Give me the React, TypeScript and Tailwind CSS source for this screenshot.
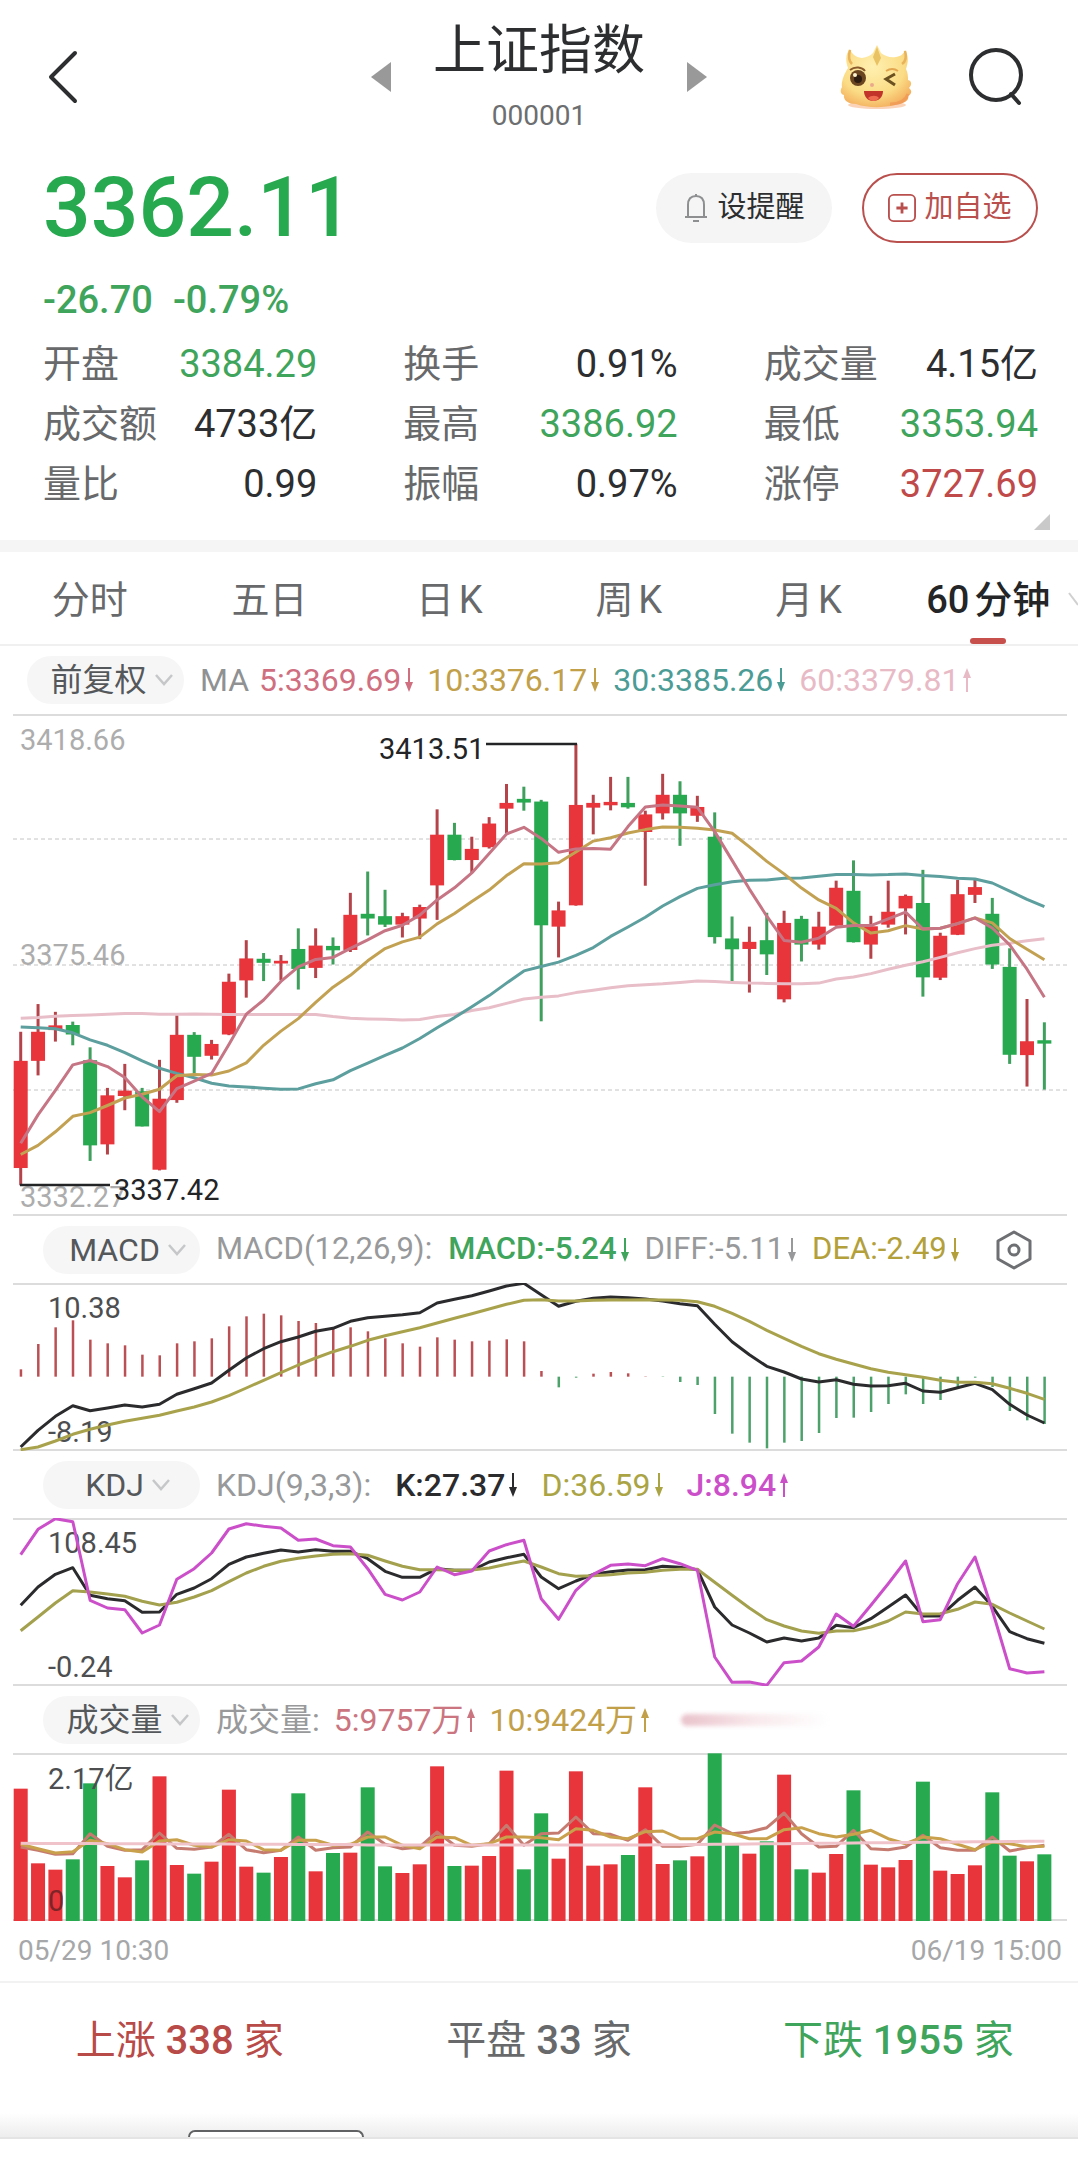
import { useState, type ReactNode } from "react"
import { clsx } from "clsx"

// ─── Quote data ────────────────────────────────────────────────────────────────

type Tone = "up" | "down" | "flat"

const TONE_TEXT: Record<Tone, string> = {
  up: "text-[#c04a4a]",
  down: "text-[#3fa45c]",
  flat: "text-[#2c2e30]",
}

const STATS: { label: string; value: string; tone: Tone }[] = [
  { label: "开盘", value: "3384.29", tone: "down" },
  { label: "换手", value: "0.91%", tone: "flat" },
  { label: "成交量", value: "4.15亿", tone: "flat" },
  { label: "成交额", value: "4733亿", tone: "flat" },
  { label: "最高", value: "3386.92", tone: "down" },
  { label: "最低", value: "3353.94", tone: "down" },
  { label: "量比", value: "0.99", tone: "flat" },
  { label: "振幅", value: "0.97%", tone: "flat" },
  { label: "涨停", value: "3727.69", tone: "up" },
]

const TABS = ["分时", "五日", "日K", "周K", "月K", "60分钟"]

// ─── Chart data ────────────────────────────────────────────────────────────────

const CHART_W = 1078
const STEP = 17.35
const FIRST_X = 20.7

const RED = "#e8343b"
const GREEN = "#27a950"

// [direction, high, body top, body bottom, low]
const CANDLES: [string, number, number, number, number][] = [
  ["r", 982, 1068, 1385, 1436], ["r", 900, 982, 1068, 1111], ["r", 923, 963, 977, 1011],
  ["g", 952, 962, 990, 1022], ["g", 1028, 1066, 1318, 1364], ["r", 1148, 1170, 1315, 1345],
  ["r", 1077, 1156, 1172, 1214], ["g", 1148, 1158, 1262, 1262], ["r", 1065, 1180, 1390, 1392],
  ["r", 933, 991, 1184, 1192], ["g", 983, 991, 1056, 1106], ["r", 1006, 1018, 1053, 1064],
  ["r", 810, 834, 990, 992], ["r", 711, 765, 830, 881], ["g", 749, 766, 778, 832],
  ["r", 755, 772, 780, 830], ["g", 676, 737, 796, 857], ["r", 676, 727, 793, 823],
  ["g", 703, 728, 741, 783], ["r", 571, 636, 740, 746], ["g", 508, 633, 647, 697],
  ["g", 562, 640, 665, 672], ["r", 630, 640, 665, 703], ["r", 606, 613, 647, 708],
  ["r", 324, 399, 549, 651], ["g", 364, 399, 474, 475], ["r", 405, 441, 474, 512],
  ["r", 347, 366, 436, 440], ["r", 249, 305, 322, 395], ["g", 257, 293, 304, 328],
  ["g", 296, 301, 667, 951], ["r", 597, 623, 671, 762], ["r", 130, 311, 608, 609],
  ["r", 281, 305, 319, 398], ["r", 228, 302, 312, 327], ["g", 228, 305, 318, 322],
  ["r", 328, 339, 391, 550], ["r", 219, 281, 336, 354], ["g", 241, 281, 336, 432],
  ["r", 284, 317, 343, 361], ["g", 333, 405, 702, 721], ["g", 641, 706, 738, 832],
  ["r", 671, 716, 737, 866], ["g", 630, 711, 753, 814], ["r", 624, 660, 886, 895],
  ["g", 639, 648, 724, 774], ["r", 627, 671, 724, 739], ["r", 535, 556, 668, 668],
  ["g", 475, 565, 717, 718], ["r", 639, 670, 724, 766], ["r", 535, 627, 665, 674],
  ["r", 576, 580, 617, 694], ["g", 503, 601, 821, 878], ["r", 689, 698, 822, 829],
  ["r", 533, 575, 695, 696], ["r", 528, 554, 577, 601], ["g", 586, 633, 783, 796],
  ["g", 735, 790, 1050, 1077], ["r", 885, 1010, 1051, 1144], ["g", 954, 1007, 1017, 1153],
]

const MA5 = [1312, 1228, 1155, 1080, 1067, 1085, 1117, 1175, 1218, 1150, 1128, 1105, 1020, 930, 888, 833, 790, 768, 762, 735, 710, 683, 667, 637, 592, 556, 512, 455, 397, 377, 410, 451, 441, 440, 442, 375, 317, 311, 314, 318, 390, 475, 560, 640, 712, 717, 705, 673, 668, 668, 648, 628, 678, 676, 662, 645, 675, 725, 797, 880]
const MA10 = [1345, 1318, 1278, 1232, 1221, 1200, 1178, 1167, 1152, 1112, 1108, 1110, 1098, 1074, 1022, 980, 943, 895, 850, 815, 772, 736, 716, 702, 663, 632, 597, 563, 520, 485, 486, 482, 450, 418, 408, 394, 384, 376, 377, 380, 385, 395, 435, 478, 515, 557, 592, 617, 660, 690, 683, 668, 678, 676, 662, 645, 660, 706, 738, 769]
const MA30 = [968, 970, 973, 985, 1006, 1022, 1044, 1068, 1090, 1105, 1118, 1134, 1142, 1145, 1149, 1152, 1151, 1136, 1124, 1097, 1075, 1052, 1030, 1002, 970, 940, 908, 875, 838, 802, 789, 776, 756, 733, 700, 672, 643, 610, 582, 558, 547, 538, 534, 533, 528, 527, 522, 517, 517, 518, 517, 515, 520, 523, 528, 530, 542, 566, 590, 612]
const MA60 = [942, 940, 936, 934, 932, 930, 928, 928, 930, 930, 929, 930, 931, 931, 931, 931, 931, 931, 937, 942, 944, 945, 947, 946, 937, 931, 919, 911, 898, 885, 880, 876, 866, 859, 852, 846, 843, 840, 836, 832, 833, 836, 838, 839, 840, 840, 838, 826, 820, 810, 797, 785, 775, 762, 748, 736, 726, 720, 713, 707]

const MACD_ZERO = 499
const MACD_BARS = [477, 401, 351, 330, 388, 399, 405, 433, 435, 399, 393, 384, 348, 318, 310, 315, 332, 338, 355, 351, 363, 384, 399, 409, 381, 388, 393, 391, 387, 393, 482, 531, 502, 490, 485, 489, 498, 500, 515, 524, 611, 670, 697, 714, 697, 692, 668, 623, 622, 605, 581, 552, 581, 569, 532, 502, 530, 602, 630, 641]
const DIFF = [710, 660, 618, 586, 601, 593, 584, 590, 582, 552, 535, 518, 480, 443, 415, 394, 380, 363, 354, 333, 322, 318, 313, 307, 278, 267, 256, 242, 227, 219, 253, 288, 273, 264, 260, 262, 266, 272, 280, 286, 342, 394, 433, 468, 485, 506, 515, 508, 522, 527, 526, 519, 542, 546, 532, 519, 538, 582, 614, 638]
const DEA = [718, 710, 692, 672, 657, 644, 633, 624, 615, 602, 590, 575, 556, 533, 510, 487, 464, 443, 424, 408, 390, 376, 364, 352, 338, 324, 310, 296, 282, 270, 268, 272, 272, 270, 269, 269, 268, 269, 270, 274, 288, 309, 333, 360, 384, 408, 430, 447, 461, 475, 486, 493, 501, 510, 516, 516, 520, 534, 549, 567]

const KDJ_K = [435, 380, 342, 322, 405, 415, 421, 456, 455, 402, 383, 355, 312, 290, 279, 269, 275, 268, 273, 273, 295, 333, 351, 351, 325, 330, 330, 305, 292, 282, 350, 385, 362, 342, 334, 329, 328, 318, 321, 328, 440, 494, 518, 545, 533, 542, 533, 495, 502, 475, 440, 404, 467, 467, 420, 380, 438, 514, 535, 549]
const KDJ_D = [511, 470, 428, 391, 395, 401, 408, 423, 434, 426, 410, 391, 364, 338, 318, 303, 294, 287, 282, 280, 285, 302, 318, 328, 328, 330, 329, 323, 312, 302, 320, 340, 348, 346, 343, 338, 336, 330, 327, 327, 366, 405, 443, 478, 497, 512, 519, 512, 511, 500, 482, 455, 461, 460, 447, 425, 432, 458, 482, 506]
const KDJ_J = [283, 207, 175, 184, 420, 443, 448, 518, 494, 357, 325, 278, 206, 190, 198, 203, 240, 236, 256, 260, 325, 402, 419, 395, 320, 343, 332, 272, 253, 240, 415, 477, 390, 342, 315, 311, 316, 295, 310, 330, 590, 666, 665, 675, 607, 602, 560, 461, 498, 435, 370, 302, 484, 478, 370, 290, 450, 625, 638, 634]

const VOLUME = [295, 519, 538, 507, 279, 527, 561, 510, 258, 524, 550, 514, 298, 529, 547, 500, 309, 543, 488, 487, 291, 528, 548, 522, 228, 527, 526, 497, 241, 537, 369, 505, 243, 526, 522, 494, 291, 521, 510, 498, 189, 461, 490, 453, 253, 537, 547, 491, 300, 523, 531, 509, 274, 541, 551, 525, 306, 496, 513, 492]
const VOLUME_SIDE = "rrrggrrgrrgrrrgrgrgrggrrrgrrrggrrrrgrrgrggrgrgrrgrrrgrrrggrg"
const VOL_MA5 = [470, 480, 492, 490, 430, 468, 480, 478, 428, 474, 477, 470, 432, 478, 487, 480, 440, 480, 472, 470, 425, 462, 475, 470, 425, 465, 468, 460, 405, 465, 430, 428, 380, 430, 432, 450, 418, 468, 468, 462, 404, 430, 425, 412, 368, 430, 470, 468, 420, 475, 478, 470, 435, 472, 480, 480, 440, 482, 472, 465]
const VOL_MA10 = [462, 475, 488, 484, 450, 460, 478, 485, 452, 448, 465, 470, 448, 452, 478, 480, 450, 450, 465, 462, 440, 440, 465, 475, 440, 442, 465, 460, 440, 440, 442, 448, 415, 420, 440, 445, 424, 422, 445, 445, 425, 430, 445, 445, 418, 412, 430, 440, 432, 420, 445, 460, 440, 445, 462, 478, 455, 460, 470, 468]
const VOL_MA60 = VOLUME.map((_, i) => (i < 20 ? 459 + i * 0.2 : i < 36 ? 464 : 464 - (i - 36) * 0.5))

// ─── Chart helpers ─────────────────────────────────────────────────────────────

type Scale = (v: number) => number

const xAt = (i: number) => FIRST_X + i * STEP
const priceY: Scale = (v) => (v - 42) / 2.958
const macdY: Scale = (v) => (v - 218) / 3
const kdjY: Scale = (v) => (v - 173) / 3
const volumeY: Scale = (v) => (v - 188) / 3

function Line({ data, y, color }: { data: number[]; y: Scale; color: string }) {
  const points = data.map((v, i) => `${xAt(i).toFixed(1)},${y(v).toFixed(1)}`).join(" ")
  return <polyline points={points} fill="none" stroke={color} strokeWidth="3" strokeLinejoin="round" />
}

function ChartFrame({ height, label, children }: { height: number; label: string; children: ReactNode }) {
  return (
    <svg
      viewBox={`0 0 ${CHART_W} ${height}`}
      className="block h-auto w-full font-[Roboto,'Noto_Sans_CJK_SC',sans-serif]"
      role="img"
      aria-label={label}
    >
      <path d={`M13 1H1067M13 ${height - 1}H1067`} stroke="#dcdcdc" strokeWidth="2" />
      {children}
    </svg>
  )
}

function AxisLabel({ x, y, color = "#4c4e50", children }: { x: number; y: number; color?: string; children: string }) {
  return (
    <text x={x} y={y} fontSize="29" fill={color}>
      {children}
    </text>
  )
}

function PriceChart() {
  return (
    <ChartFrame height={502} label="60分钟K线">
      {[125, 251, 376].map((y) => (
        <path key={y} d={`M13 ${y}H1067`} stroke="#c4c4c4" strokeWidth="1" strokeDasharray="4 3" />
      ))}
      <AxisLabel x={20} y={36} color="#adadad">3418.66</AxisLabel>
      <AxisLabel x={20} y={251} color="#adadad">3375.46</AxisLabel>
      <AxisLabel x={20} y={493} color="#adadad">3332.27</AxisLabel>
      {CANDLES.map(([side, high, top, bottom, low], i) => (
        <g key={i}>
          <rect x={xAt(i) - 1.5} y={priceY(high)} width="3" height={priceY(low) - priceY(high)} fill={side === "r" ? "#b5444a" : "#3f9f5c"} />
          <rect x={xAt(i) - 7} y={priceY(top)} width="14" height={priceY(bottom) - priceY(top)} fill={side === "r" ? RED : GREEN} />
        </g>
      ))}
      <Line data={MA60} y={priceY} color="#e8bec9" />
      <Line data={MA30} y={priceY} color="#5c9f9e" />
      <Line data={MA10} y={priceY} color="#c2a152" />
      <Line data={MA5} y={priceY} color="#c67585" />
      <path d="M486 30H577M20 471H110" stroke="#222426" strokeWidth="2.5" />
      <AxisLabel x={379} y={45} color="#222426">3413.51</AxisLabel>
      <AxisLabel x={114} y={486} color="#222426">3337.42</AxisLabel>
    </ChartFrame>
  )
}

function MacdChart() {
  return (
    <ChartFrame height={168} label="MACD">
      {MACD_BARS.map((v, i) => (
        <rect
          key={i}
          x={xAt(i) - 1}
          y={macdY(Math.min(v, MACD_ZERO))}
          width="2.5"
          height={Math.abs(v - MACD_ZERO) / 3}
          fill={v < MACD_ZERO ? "#bb5054" : "#4da26c"}
        />
      ))}
      <AxisLabel x={48} y={35}>10.38</AxisLabel>
      <AxisLabel x={48} y={159}>-8.19</AxisLabel>
      <Line data={DIFF} y={macdY} color="#2b2b2e" />
      <Line data={DEA} y={macdY} color="#a9a24c" />
    </ChartFrame>
  )
}

function KdjChart() {
  return (
    <ChartFrame height={168} label="KDJ">
      <AxisLabel x={48} y={35}>108.45</AxisLabel>
      <AxisLabel x={48} y={159}>-0.24</AxisLabel>
      <Line data={KDJ_K} y={kdjY} color="#2b2b2e" />
      <Line data={KDJ_D} y={kdjY} color="#a3a04e" />
      <Line data={KDJ_J} y={kdjY} color="#cc4fca" />
    </ChartFrame>
  )
}

function VolumeChart() {
  return (
    <ChartFrame height={168} label="成交量">
      {VOLUME.map((v, i) => (
        <rect key={i} x={xAt(i) - 7} y={volumeY(v)} width="14" height={168 - volumeY(v)} fill={VOLUME_SIDE[i] === "r" ? RED : GREEN} />
      ))}
      <AxisLabel x={48} y={36}>2.17亿</AxisLabel>
      <text x="48" y="158" fontSize="29" fill="#7d2428">0</text>
      <Line data={VOL_MA5} y={volumeY} color="#c67b70" />
      <Line data={VOL_MA10} y={volumeY} color="#c9a04c" />
      <Line data={VOL_MA60} y={volumeY} color="#f0c3cb" />
    </ChartFrame>
  )
}

// ─── Small parts ───────────────────────────────────────────────────────────────

function Trend({ dir }: { dir: "up" | "down" }) {
  return (
    <svg viewBox="0 0 8 24" className={clsx("h-6 w-2 shrink-0", dir === "up" && "rotate-180")} aria-hidden="true">
      <path d="M4 0V18" stroke="currentColor" strokeWidth="2" />
      <path d="M0 14H8L4 24Z" fill="currentColor" />
    </svg>
  )
}

function Reading({ text, dir, className }: { text: string; dir?: "up" | "down"; className: string }) {
  return (
    <span className={clsx("flex items-center gap-1 whitespace-nowrap", className)}>
      {text}
      {dir && <Trend dir={dir} />}
    </span>
  )
}

function PillSelect({ label, options }: { label: string; options: string[] }) {
  return (
    <label className="flex h-12 w-[157px] shrink-0 items-center justify-center gap-2 rounded-full bg-[#f6f6f7] pl-3">
      <select aria-label={label} className="field-sizing-content appearance-none bg-transparent text-[32px] leading-[48px] text-[#55585b] outline-none">
        {options.map((o) => (
          <option key={o}>{o}</option>
        ))}
      </select>
      <svg viewBox="0 0 18 12" className="h-3 w-[18px]" fill="none" stroke="#c6c7c9" strokeWidth="2.5" aria-hidden="true">
        <path d="M1 1L9 10L17 1" />
      </svg>
    </label>
  )
}

function Mascot() {
  return (
    <svg viewBox="0 0 72 66" className="h-[66px] w-[72px]" aria-hidden="true">
      <defs>
        <radialGradient id="face" cx="0.45" cy="0.35" r="0.7">
          <stop offset="0" stopColor="#fff0b0" />
          <stop offset="0.65" stopColor="#fbdc86" />
          <stop offset="1" stopColor="#f3ad5c" />
        </radialGradient>
      </defs>
      <ellipse cx="37" cy="61" rx="29" ry="4" fill="#f6b58a" opacity="0.6" />
      <path
        d="M8 24C5 16 6 9 10 5C12 10 15 13 22 14C27 13 30 12 33 9L37 1L41 9C45 12 50 14 56 13C62 12 64 9 65 6C69 12 68 19 66 25C68 29 68 33 68 36C72 37 72 41 69 44C73 47 71 51 68 52C70 57 62 60 55 61C43 64 27 64 16 60C8 60 3 56 4 51C0 50 0 46 2 43C1 38 4 30 8 24Z"
        fill="url(#face)"
      />
      <path d="M37 3L41 14L37 22L33 13Z" fill="#e9c264" />
      <path d="M10 6C8 13 9 17 12 20M65 7C67 14 65 18 62 20" stroke="#e8b35a" strokeWidth="2.5" fill="none" />
      <path d="M10 26C15 22 22 23 25 27" stroke="#8a5a2c" strokeWidth="2" fill="none" />
      <circle cx="18" cy="34" r="8" fill="#6b4420" />
      <circle cx="18" cy="35" r="4" fill="#2e1c10" />
      <circle cx="15" cy="31" r="2" fill="#fff3cf" />
      <path d="M46 27C51 24 55 25 58 27" stroke="#e2a650" strokeWidth="2" fill="none" />
      <path d="M55 30L46 35L55 41" stroke="#6b5020" strokeWidth="3" fill="none" />
      <circle cx="32" cy="41" r="2" fill="#eba98c" />
      <path d="M24 47H43C43 53 39 57 33 57C28 57 24 53 24 47Z" fill="#c2332a" />
      <path d="M28 54C31 51 37 51 39 54C36 58 31 58 28 54Z" fill="#ef6c50" />
      <path d="M50 60C60 60 66 56 68 50" stroke="#ee9052" strokeWidth="3" fill="none" opacity="0.6" />
    </svg>
  )
}

// ─── Page ──────────────────────────────────────────────────────────────────────

export default function App() {
  const [tab, setTab] = useState("60分钟")

  return (
    <main className="w-full overflow-x-hidden bg-white font-[Roboto,'Noto_Sans_CJK_SC',sans-serif] text-[#2c2e30]">
      {/* Title bar */}
      <header className="grid grid-cols-[1fr_auto_1fr] items-center pt-[18px]">
        <div className="pl-12">
          <button aria-label="返回" className="block">
            <svg viewBox="0 0 30 54" className="h-[54px] w-[30px]" fill="none" stroke="#2c2e30" strokeWidth="4" strokeLinecap="round" strokeLinejoin="round">
              <path d="M27 3L3 27L27 51" />
            </svg>
          </button>
        </div>
        <div className="flex items-center gap-[42px]">
          <button aria-label="上一个">
            <svg viewBox="0 0 20 30" className="h-[30px] w-5" fill="#999999"><path d="M20 0V30L0 15Z" /></svg>
          </button>
          <div className="text-center">
            <h1 className="text-[53px] leading-[66px]">上证指数</h1>
            <p className="mt-3 text-[28px] leading-10 text-[#6c6e70]">000001</p>
          </div>
          <button aria-label="下一个">
            <svg viewBox="0 0 20 30" className="h-[30px] w-5" fill="#999999"><path d="M0 0V30L20 15Z" /></svg>
          </button>
        </div>
        <div className="flex items-center justify-end gap-14 pr-[54px]">
          <button aria-label="助手"><Mascot /></button>
          <button aria-label="搜索">
            <svg viewBox="0 0 56 58" className="h-[58px] w-14" fill="none" stroke="#2c2e30" strokeWidth="4" strokeLinecap="round">
              <circle cx="28" cy="27" r="25" />
              <path d="M43 46L51 55" />
            </svg>
          </button>
        </div>
      </header>

      {/* Quote */}
      <section className="pl-[43px] pr-10 pt-[26px]">
        <div className="flex items-center justify-between">
          <p className="text-[84px] font-medium leading-[92px] text-[#27a950]">3362.11</p>
          <div className="flex gap-[30px] text-[29px]">
            <button className="flex h-[70px] w-[176px] items-center justify-center gap-2 rounded-full bg-[#f5f5f6]">
              <svg viewBox="0 0 26 30" className="h-[30px] w-[26px]" fill="none" stroke="#8d8f91" strokeWidth="2" strokeLinejoin="round">
                <path d="M2 24H24M5 24V12C5 6 8 3 13 3C18 3 21 6 21 12V24M10 28H16M13 1V3" />
              </svg>
              设提醒
            </button>
            <button className="flex h-[70px] w-[176px] items-center justify-center gap-2 rounded-full border-2 border-[#b9504e] text-[#b9504e]">
              <svg viewBox="0 0 30 30" className="h-7 w-7" fill="none" stroke="currentColor" strokeWidth="2">
                <rect x="1" y="1" width="28" height="28" rx="5" />
                <path d="M9 15H21M15 9V21" strokeWidth="3" />
              </svg>
              加自选
            </button>
          </div>
        </div>
        <p className="mt-[22px] flex gap-5 text-[38px] font-medium leading-[48px] text-[#3fa45c]">
          <span>-26.70</span>
          <span>-0.79%</span>
        </p>
        <dl className="mt-[10px] grid grid-cols-3 gap-x-[86px] text-[38px] leading-[60px]">
          {STATS.map((s) => (
            <div key={s.label} className="flex justify-between whitespace-nowrap">
              <dt className="text-[#67696b]">{s.label}</dt>
              <dd className={TONE_TEXT[s.tone]}>{s.value}</dd>
            </div>
          ))}
        </dl>
      </section>
      <div className="flex justify-end pb-[10px] pr-7">
        <svg viewBox="0 0 16 16" className="h-4 w-4" fill="#c9c9c9" aria-hidden="true"><path d="M16 0V16H0Z" /></svg>
      </div>
      <div className="h-3 bg-[#f5f5f5]" />

      {/* Period tabs */}
      <nav role="tablist" className="relative flex border-b-2 border-[#f0f0f0] text-[38px] leading-[88px] [text-autospace:normal]">
        {TABS.map((t) => (
          <button
            key={t}
            role="tab"
            aria-selected={t === tab}
            onClick={() => setTab(t)}
            className={clsx("relative flex-1 whitespace-nowrap pt-1", t === tab ? "font-medium text-[#232527]" : "text-[#67696b]")}
          >
            {t}
            {t === tab && <span className="absolute bottom-0 left-1/2 h-[6px] w-9 -translate-x-1/2 rounded-full bg-[#c8504c]" />}
          </button>
        ))}
        <svg viewBox="0 0 10 16" className="absolute right-0 top-10 h-4 w-[10px]" fill="none" stroke="#d0d0d0" strokeWidth="2" aria-hidden="true">
          <path d="M1 1L10 13" />
        </svg>
      </nav>

      {/* Price */}
      <div className="flex h-[68px] items-center pl-[27px] text-[32px]">
        <PillSelect label="复权" options={["前复权", "后复权", "不复权"]} />
        <div className="ml-4 flex gap-[14px]">
          <span className="-mr-1 text-[#8f9193]">MA</span>
          <Reading text="5:3369.69" dir="down" className="text-[#cf6f7f]" />
          <Reading text="10:3376.17" dir="down" className="text-[#c2a04a]" />
          <Reading text="30:3385.26" dir="down" className="text-[#4c9c96]" />
          <Reading text="60:3379.81" dir="up" className="text-[#e8bac6]" />
        </div>
      </div>
      <PriceChart />

      {/* MACD */}
      <div className="flex h-[67px] items-center pl-[43px] text-[31px]">
        <PillSelect label="指标一" options={["MACD", "BOLL", "RSI"]} />
        <div className="ml-4 flex gap-4">
          <Reading text="MACD(12,26,9):" className="text-[#98999b]" />
          <Reading text="MACD:-5.24" dir="down" className="font-medium text-[#3fa45c]" />
          <Reading text="DIFF:-5.11" dir="down" className="text-[#98999b]" />
          <Reading text="DEA:-2.49" dir="down" className="text-[#b3a03a]" />
        </div>
        <button aria-label="指标设置" className="ml-auto mr-[46px]">
          <svg viewBox="0 0 36 40" className="h-10 w-9" fill="none" stroke="#6d6f72" strokeWidth="3" strokeLinejoin="round">
            <path d="M18 2L34 11V29L18 38L2 29V11Z" />
            <circle cx="18" cy="20" r="5" />
          </svg>
        </button>
      </div>
      <MacdChart />

      {/* KDJ */}
      <div className="flex h-[67px] items-center pl-[43px] text-[32px]">
        <PillSelect label="指标二" options={["KDJ", "WR", "CCI"]} />
        <div className="ml-4 flex gap-6">
          <Reading text="KDJ(9,3,3):" className="text-[#98999b]" />
          <Reading text="K:27.37" dir="down" className="font-medium text-[#2b2b2e]" />
          <Reading text="D:36.59" dir="down" className="text-[#aaa445]" />
          <Reading text="J:8.94" dir="up" className="font-medium text-[#cc4fca]" />
        </div>
      </div>
      <KdjChart />

      {/* Volume */}
      <div className="flex h-[67px] items-center pl-[43px] text-[32px]">
        <PillSelect label="指标三" options={["成交量", "成交额"]} />
        <div className="ml-4 flex gap-[14px]">
          <Reading text="成交量:" className="text-[#98999b]" />
          <Reading text="5:9757万" dir="up" className="text-[#cb7580]" />
          <Reading text="10:9424万" dir="up" className="text-[#c2a04a]" />
        </div>
        <div className="ml-8 h-3 w-[148px] rounded-full bg-linear-to-r from-[#e9c2cb] via-[#f8e9ec] to-white blur-[2px]" />
      </div>
      <VolumeChart />
      <div className="flex justify-between border-b-2 border-[#f2f2f2] pl-[18px] pr-4 text-[28px] leading-[60px] text-[#a6a7a9]">
        <time>05/29 10:30</time>
        <time>06/19 15:00</time>
      </div>

      {/* Market breadth */}
      <section className="grid grid-cols-3 py-7 text-center text-[40px] leading-[60px]">
        <p className="text-[#b84a48]">上涨 <span className="font-medium">338</span> 家</p>
        <p className="text-[#67696b]">平盘 <span className="font-medium">33</span> 家</p>
        <p className="text-[#3fa45c]">下跌 <span className="font-medium">1955</span> 家</p>
      </section>

      {/* Top edge of the bottom sheet */}
      <footer className="mt-[14px] pb-[22px]">
        <div className="flex h-[26px] items-end border-b-2 border-[#e4e4e4] bg-linear-to-b from-white to-[#ededed] pl-[188px]">
          <div className="h-[7px] w-44 rounded-t-[10px] border-2 border-b-0 border-[#606264] bg-white" />
        </div>
      </footer>
    </main>
  )
}
